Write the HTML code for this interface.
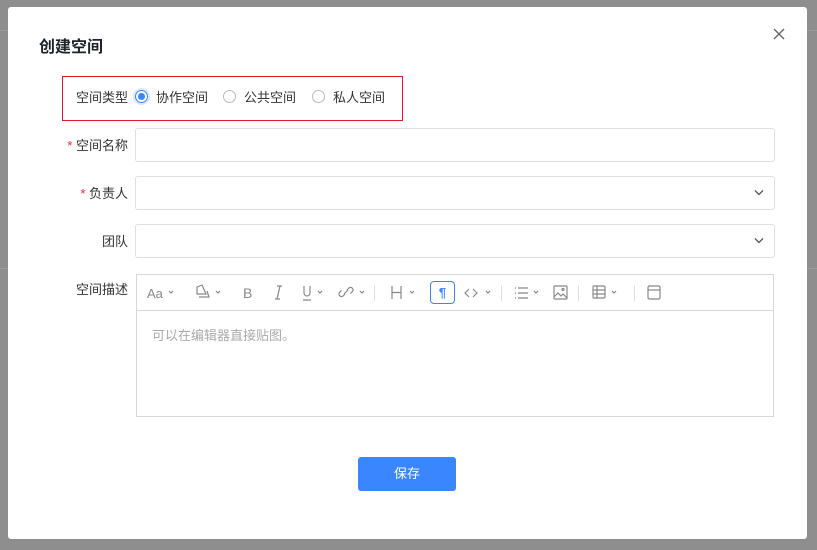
<!DOCTYPE html><html><head><meta charset="utf-8"><style>
*{box-sizing:border-box;margin:0;padding:0}
body{width:817px;height:550px;overflow:hidden;background:#8e8e8e;font-family:"Liberation Sans","Noto Sans CJK SC",sans-serif;position:relative;color:#333}
.bl{position:absolute;left:0;right:0;height:1px;background:#9a9a9a}
.m{position:absolute;left:8px;top:7px;width:799px;height:532px;background:#fff;border-radius:3px}
.t{position:absolute;left:31px;top:26px;font-size:16px;font-weight:bold;color:#1f2329}
.x{position:absolute;left:765px;top:21px}
.red{position:absolute;left:54px;top:69px;width:341px;height:45px;border:1px solid #e5162a}
.lab{position:absolute;font-size:13px;color:#333;text-align:right;width:70px;left:50px}
.lab b{color:#f5222d;font-weight:normal}
.r{position:absolute;top:80px;font-size:13px;display:flex;align-items:center}
.rc{width:13px;height:13px;border:1px solid #bbb;border-radius:50%;margin-right:8px;position:relative}
.rc.on{border-color:#3a86ff;box-shadow:0 0 0 2px #d9e8ff}
.rc.on:after{content:"";position:absolute;left:2px;top:2px;width:7px;height:7px;border-radius:50%;background:#3a86ff}
.in{position:absolute;left:127px;width:640px;height:34px;border:1px solid #dcdfe6;border-radius:3px}
.ch{position:absolute;right:10px;top:12px}
.ed{position:absolute;left:128px;top:267px;width:638px;height:143px;border:1px solid #d5d8de}
.tb{height:36px;border-bottom:1px solid #d5d8de;position:relative;font-size:13px;color:#777}
.tb svg{position:absolute}
.sep{position:absolute;top:10px;width:1px;height:16px;background:#e0e0e0}
.ph{padding:14px 15px;font-size:13px;color:#aaa}
.btn{position:absolute;left:350px;top:450px;width:98px;height:34px;background:#3a86ff;color:#fff;border-radius:3px;font-size:13px;text-align:center;line-height:34px}
</style></head><body>
<div class="bl" style="top:30px"></div><div class="bl" style="top:268px"></div>
<div class="m">
<div class="t">创建空间</div>
<svg class="x" width="12" height="12" viewBox="0 0 12 12"><path d="M1 1L11 11M11 1L1 11" stroke="#666" stroke-width="1.4"/></svg>
<div class="red"></div>
<div class="lab" style="top:80px">空间类型</div>
<div class="r" style="left:127px"><div class="rc on"></div>协作空间</div>
<div class="r" style="left:215px"><div class="rc"></div>公共空间</div>
<div class="r" style="left:304px"><div class="rc"></div>私人空间</div>
<div class="lab" style="top:128px"><b>* </b>空间名称</div>
<div class="in" style="top:121px"></div>
<div class="lab" style="top:176px"><b>* </b>负责人</div>
<div class="in" style="top:169px"><svg class="ch" width="10" height="7" viewBox="0 0 10 7"><path d="M1 1.5L5 5.5L9 1.5" stroke="#555" stroke-width="1.3" fill="none"/></svg></div>
<div class="lab" style="top:224px">团队</div>
<div class="in" style="top:217px"><svg class="ch" width="10" height="7" viewBox="0 0 10 7"><path d="M1 1.5L5 5.5L9 1.5" stroke="#555" stroke-width="1.3" fill="none"/></svg></div>
<div class="lab" style="top:272px">空间描述</div>
<div class="ed"><div class="tb">
<svg width="638" height="36" viewBox="0 0 638 36" fill="none" stroke="#888" stroke-width="1.2">
<text x="10" y="23" font-size="13" fill="#888" stroke="none" font-family="Liberation Sans">Aa</text>
<path d="M32 16l2 2 2-2"/>
<path d="M60 12l5 -2 4 9h-9zM62 22h10l-2-6"/><path d="M79 16l2 2 2-2"/>
<text x="106" y="23" font-size="14" fill="#888" stroke="none" font-family="Liberation Sans">B</text>
<path d="M140 11h5M138 24h5M143 11l-3 13"/>
<path d="M167 11v7a3 3 0 0 0 6 0v-7M166 25h8"/><path d="M181 16l2 2 2-2"/>
<path d="M208 19l-2 2a2.5 2.5 0 0 1-3.5-3.5l2-2M210 15l2-2a2.5 2.5 0 0 1 3.5 3.5l-2 2M207 19l4-4"/><path d="M223 16l2 2 2-2"/>
<path d="M255 11v13M264 11v13M255 17.5h9"/><path d="M273 16l2 2 2-2"/>
<path d="M332 14l-4 4 4 4M336 14l4 4-4 4"/><path d="M349 16l2 2 2-2"/>
<path d="M381 13h10M381 18h10M381 23h10M378 13h1M378 18h1M378 23h1"/><path d="M397 16l2 2 2-2"/>
<rect x="417" y="11" width="13" height="13" rx="1"/><path d="M417 22l4-4 3 3 2-2 4 4"/><circle cx="426" cy="14.5" r="1"/>
<rect x="456" y="11" width="12" height="12" rx="1"/><path d="M456 15h12M456 19h12M460 11v12"/><path d="M475 16l2 2 2-2"/>
<rect x="511" y="11" width="12" height="13" rx="1.5"/><path d="M511 15h12"/>
</svg>
<div class="sep" style="left:237px"></div>
<div style="position:absolute;left:293px;top:6px;width:25px;height:23px;border:1px solid #3a86ff;border-radius:4px;color:#3a86ff;text-align:center;line-height:21px;font-weight:bold">¶</div>
<div class="sep" style="left:364px"></div>
<div class="sep" style="left:441px"></div>
<div class="sep" style="left:497px"></div>
</div><div class="ph">可以在编辑器直接贴图。</div></div>
<div class="btn">保存</div>
</div>
</body></html>
